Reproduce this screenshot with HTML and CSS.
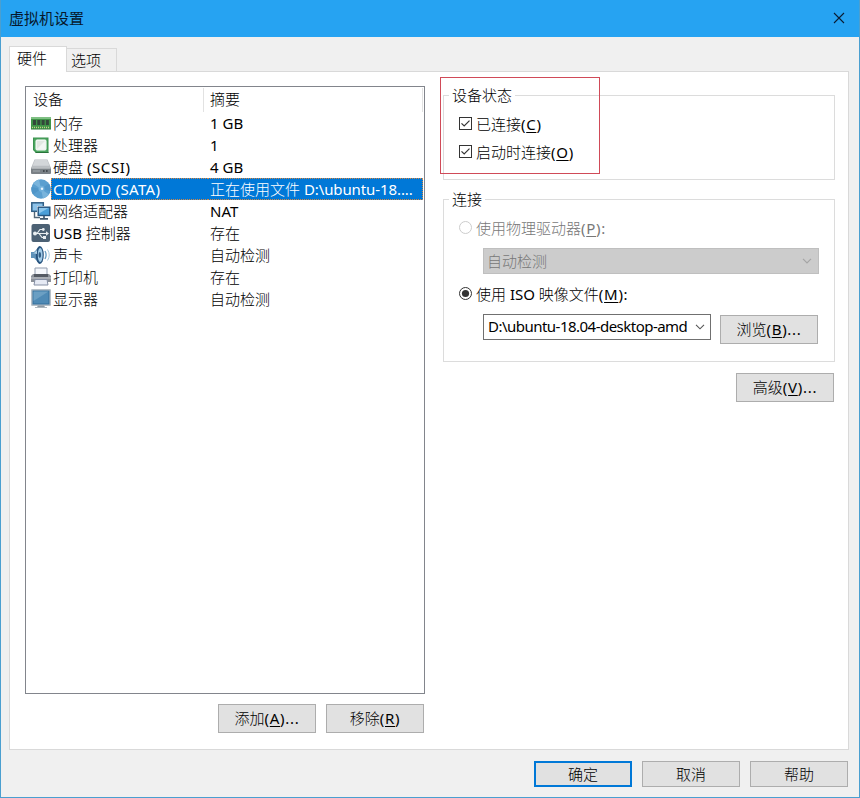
FILE: index.html
```html
<!DOCTYPE html>
<html lang="zh-CN">
<head>
<meta charset="utf-8">
<title>虚拟机设置</title>
<link rel="stylesheet" href="styles.css">
</head>
<body>
<div class="window">
  <header class="titlebar">
    <span>虚拟机设置</span>
    <svg class="close" width="12" height="12" viewBox="0 0 12 12"><path d="M1 1L11 11M11 1L1 11" stroke="#0b1d33" stroke-width="1.1"/></svg>
  </header>
  <nav class="tabs">
    <div class="tab active">硬件</div>
    <div class="tab">选项</div>
  </nav>
  <main class="panel">
    <section class="left">
      <div class="list">
        <div class="head"><span class="c1">设备</span><span class="c2">摘要</span></div>
        <div class="row">
          <svg class="ico" viewBox="0 0 20 20"><rect x="0" y="4" width="20" height="12" fill="#3f9447"/><rect x="0" y="4" width="20" height="2" fill="#7fc083"/><path d="M2 7h3v5H2zM6.3 7h3v5h-3zM10.6 7h3v5h-3zM14.9 7h3v5h-3z" fill="#33473a"/><path d="M1 14.5h18" stroke="#c5d08c" stroke-width="1.4" stroke-dasharray="1 1"/><path d="M0 16.2h20" stroke="#2b6e35" stroke-width=".7"/></svg>
          <span class="name">内存</span><span class="sum"><span class="en">1 GB</span></span></div>
        <div class="row">
          <svg class="ico" viewBox="0 0 20 20"><path d="M2 2.5h15.5v15.5H5l-3-3z" fill="#3c9350"/><path d="M3 3.5h13.5v13.5H5.5L3 14.5z" fill="#4ca55f"/><rect x="5" y="5" width="10" height="10" rx="1" fill="#e2e8e2" stroke="#fff" stroke-width="1"/><path d="M6 14L14 6v8z" fill="#f3f6f3"/><path d="M4.5 17.5h13" stroke="#28733a"/></svg>
          <span class="name">处理器</span><span class="sum"><span class="en">1</span></span></div>
        <div class="row">
          <svg class="ico" viewBox="0 0 20 20"><path d="M3.5 2.5h13L20 11H0z" fill="#b9bdc1"/><path d="M4 2.8h12l2.5 6H1.7z" fill="#d3d6d9"/><rect x="0" y="10.5" width="20" height="6.5" rx="1" fill="#7b8186"/><path d="M.5 11h19" stroke="#dddfe1"/><rect x="12" y="13" width="1.6" height="2" fill="#454b50"/><rect x="15" y="13" width="1.6" height="2" fill="#454b50"/><path d="M2 14h7" stroke="#a4abb0"/></svg>
          <span class="name">硬盘 <span class="en wide">(SCSI)</span></span><span class="sum"><span class="en">4 GB</span></span></div>
        <div class="row selected">
          <svg class="ico" viewBox="0 0 20 20"><circle cx="10" cy="10" r="9.7" fill="#5a9fd0"/><path d="M10 10L2 4.5A9.7 9.7 0 0 1 8 .5zM10 10L18 15.5A9.7 9.7 0 0 1 12 19.5z" fill="#79b4dc"/><path d="M10 10L.5 8A9.7 9.7 0 0 0 2 15.5zM10 10L19.5 12A9.7 9.7 0 0 0 18 4.5z" fill="#4f95c8"/><circle cx="10.5" cy="9.8" r="3" fill="#72b1dc"/><circle cx="11" cy="9.7" r="1.2" fill="#eaf6ff"/></svg>
          <span class="name"><span class="en cd">CD/DVD (SATA)</span></span><span class="sum">正在使用文件 <span class="en iso-name">D:\ubuntu-18....</span></span></div>
        <div class="row">
          <svg class="ico" viewBox="0 0 20 20"><rect x=".8" y="1.8" width="11.5" height="8.5" fill="#8dc3ea" stroke="#315f86" stroke-width="1.5"/><path d="M3.5 11v5.5H9" fill="none" stroke="#536777" stroke-width="1.4"/><rect x="6" y="5" width="13.5" height="10.5" fill="#fff"/><rect x="7.2" y="6.2" width="11.6" height="8.3" fill="#4b9fd8" stroke="#255580" stroke-width="1.4"/><path d="M8 7h9.5L8 12.5z" fill="#8cc7ed"/><path d="M13 15v2M9 17.8h8" stroke="#425b70" stroke-width="1.7"/></svg>
          <span class="name">网络适配器</span><span class="sum"><span class="en">NAT</span></span></div>
        <div class="row">
          <svg class="ico" viewBox="0 0 20 20"><rect x=".5" y="1" width="18.5" height="18" rx="2" fill="#4c6174"/><path d="M3 10.5h13M6 10.5l3-4h3M8 10.5l3 4h2" fill="none" stroke="#e9eef1" stroke-width="1.2"/><circle cx="4" cy="10.5" r="2" fill="#e9eef1"/><circle cx="12.3" cy="6.5" r="1.4" fill="#e9eef1"/><path d="M12 13h3v3h-3zM15 8.3l3 2.2-3 2.2z" fill="#e9eef1"/></svg>
          <span class="name"><span class="en">USB</span> 控制器</span><span class="sum">存在</span></div>
        <div class="row">
          <svg class="ico" viewBox="0 0 20 20"><path d="M0 7h3l6-6v18l-6-6H0z" fill="#5d91b9"/><ellipse cx="8.8" cy="10" rx="4" ry="9" fill="#28547f"/><ellipse cx="9.2" cy="10" rx="2.4" ry="7" fill="#a2cce8"/><ellipse cx="8.8" cy="10" rx="1.3" ry="3" fill="#315d84"/><path d="M1 8h2l3-3v4z" fill="#b0d0e5"/><path d="M14 6q2.2 4 0 8" fill="none" stroke="#679fc5" stroke-width="1.3"/><path d="M16.5 4.5q3.5 5.5 0 11" fill="none" stroke="#a8c9dd"/></svg>
          <span class="name">声卡</span><span class="sum">自动检测</span></div>
        <div class="row">
          <svg class="ico" viewBox="0 0 20 20"><path d="M4 1h12v7H4z" fill="#f5f7fb" stroke="#929daf"/><path d="M2 7h16l2 2v6H0V9z" fill="#8c9199"/><path d="M3 7h14v3H3z" fill="#545a63"/><path d="M0 11h20" stroke="#c6cad0"/><path d="M4 12.5h12l1 5.5H3z" fill="#e6eaf4" stroke="#858fa4"/></svg>
          <span class="name">打印机</span><span class="sum">存在</span></div>
        <div class="row">
          <svg class="ico" viewBox="0 0 20 20"><rect x=".8" y=".8" width="18.4" height="15.4" fill="#c3ccd3" stroke="#9eabb5"/><rect x="2" y="2" width="16" height="13" fill="#4f8ab5" stroke="#356f9b"/><path d="M2.5 2.5h15L2.5 12z" fill="#6b9fc3"/><path d="M7 16.5h6l1 1.5H6z" fill="#8e9aa4"/><path d="M4 18.5h12" stroke="#adb7be"/></svg>
          <span class="name">显示器</span><span class="sum">自动检测</span></div>
      </div>
      <div class="actions">
        <button class="btn">添加<span class="en key">(<u>A</u>)...</span></button>
        <button class="btn">移除<span class="en key">(<u>R</u>)</span></button>
      </div>
    </section>
    <section class="right">
      <div class="highlight"></div>
      <fieldset class="status">
        <legend>设备状态</legend>
        <label class="opt"><svg width="13" height="13" viewBox="0 0 13 13"><rect x=".5" y=".5" width="12" height="12" fill="#fff" stroke="#333"/><path d="M2.5 6.3L5.2 9L10.5 3.7" fill="none" stroke="#333" stroke-width="1.2"/></svg><span>已连接<span class="en key">(<u>C</u>)</span></span></label>
        <label class="opt"><svg width="13" height="13" viewBox="0 0 13 13"><rect x=".5" y=".5" width="12" height="12" fill="#fff" stroke="#333"/><path d="M2.5 6.3L5.2 9L10.5 3.7" fill="none" stroke="#333" stroke-width="1.2"/></svg><span>启动时连接<span class="en key">(<u>O</u>)</span></span></label>
      </fieldset>
      <fieldset class="connection">
        <legend>连接</legend>
        <label class="opt off"><svg width="13" height="13" viewBox="0 0 13 13"><circle cx="6.5" cy="6.5" r="6" fill="#fff" stroke="#ccc"/></svg><span>使用物理驱动器<span class="en key">(<u>P</u>):</span></span></label>
        <div class="select off"><span>自动检测</span><svg width="10" height="6" viewBox="0 0 10 6"><path d="M1 .8L5 4.8L9 .8" fill="none" stroke="#a5a5a5" stroke-width="1.2"/></svg></div>
        <label class="opt iso"><svg width="13" height="13" viewBox="0 0 13 13"><circle cx="6.5" cy="6.5" r="6" fill="#fff" stroke="#333"/><circle cx="6.5" cy="6.5" r="3.6" fill="#333"/></svg><span>使用 <span class="en">ISO</span> 映像文件<span class="en key">(<u>M</u>):</span></span></label>
        <div class="file">
          <div class="select path"><span class="en">D:\ubuntu-18.04-desktop-amd</span><svg width="10" height="6" viewBox="0 0 10 6"><path d="M1 .8L5 4.8L9 .8" fill="none" stroke="#555" stroke-width="1.1"/></svg></div>
          <button class="btn">浏览<span class="en key">(<u>B</u>)...</span></button>
        </div>
      </fieldset>
      <button class="btn advanced">高级<span class="en key">(<u>V</u>)...</span></button>
    </section>
  </main>
  <footer class="footer">
    <button class="btn primary">确定</button>
    <button class="btn">取消</button>
    <button class="btn">帮助</button>
  </footer>
</div>
</body>
</html>
```
FILE: styles.css
```css
* { box-sizing: border-box; }
body {
  margin: 0;
  font: 300 15px/20px "Noto Sans", "Noto Sans CJK SC", sans-serif;
  color: #000;
}
.window {
  display: flex;
  flex-direction: column;
  width: 860px;
  height: 798px;
  background: #f0f0f0;
  border: 1px solid #4a9fd0;
  border-top: 0;
  overflow: hidden;
}
.titlebar {
  display: flex;
  justify-content: space-between;
  align-items: center;
  height: 37px;
  margin: 0 -1px;
  padding: 0 15px 2px 9px;
  background: #26a3f2;
  color: #06182c;
  font-weight: 400;
}
.close { display: block; }
.tabs {
  display: flex;
  align-items: flex-end;
  height: 34px;
  padding-left: 8px;
}
.tab {
  width: 50px;
  height: 23px;
  padding-left: 4px;
  border: 1px solid #d9d9d9;
  border-width: 1px 1px 0 0;
  line-height: 22px;
}
.tab.active {
  z-index: 1;
  width: 58px;
  height: 26px;
  margin-bottom: -1px;
  padding-left: 7px;
  border-left-width: 1px;
  background: #fff;
}
.panel {
  display: flex;
  height: 679px;
  margin: 0 10px 0 8px;
  padding: 14px 13px 0 15px;
  background: #fff;
  border: 1px solid #d9d9d9;
}
.left { flex: none; width: 400px; }
.list {
  height: 608px;
  border: 1px solid #82858c;
}
.head {
  display: flex;
  height: 25px;
  padding-top: 1px;
  line-height: 23px;
}
.c1 { width: 178px; padding-left: 7px; border-right: 1px solid #e2e2e2; }
.c2 { width: 219px; padding-left: 6px; border-right: 1px solid #e2e2e2; }
.row {
  display: flex;
  align-items: center;
  height: 22px;
  padding-left: 5px;
  line-height: 21px;
  white-space: nowrap;
}
.ico { width: 20px; height: 20px; flex: none; }
.name { width: 157px; padding-left: 2px; }
.sum { width: 215px; padding-left: 2px; }
.en { font-weight: 400; }
.cd { letter-spacing: .3px; }
.wide { letter-spacing: .6px; }
.iso-name { letter-spacing: -.1px; }
.selected .name, .selected .sum {
  height: 22px;
  background: #0078d7;
  color: #fff;
  border: 1px dotted #d48743;
  border-width: 1px 0 1px 1px;
  line-height: 20px;
}
.selected .name { padding-left: 1px; }
.selected .sum { border-width: 1px 1px 1px 0; }
.actions {
  display: flex;
  justify-content: flex-end;
  gap: 10px;
  margin-top: 10px;
  padding-right: 1px;
}
.btn {
  width: 98px;
  height: 29px;
  padding: 0 0 2px;
  background: #e1e1e1;
  border: 1px solid #adadad;
  font: inherit;
  color: #000;
  white-space: nowrap;
}
.key { letter-spacing: .7px; }
u { text-decoration-thickness: 1px; text-underline-offset: 2px; }
.right {
  position: relative;
  display: flex;
  flex: none;
  flex-direction: column;
  width: 392px;
  margin-left: 18px;
}
.highlight {
  position: absolute;
  left: -3px;
  top: -9px;
  width: 160px;
  height: 97px;
  border: 1px solid #d04a58;
}
fieldset {
  width: 392px;
  margin: 0;
  padding: 0 0 0 15px;
  border: 1px solid #dcdcdc;
}
legend {
  height: 19px;
  margin-left: -10px;
  padding: 0 3px;
  line-height: 18px;
}
.status { height: 94px; }
.connection { height: 172px; margin-top: 10px; }
.opt {
  display: flex;
  align-items: center;
  gap: 4px;
  height: 28px;
}
.status .opt:first-of-type { margin-top: 4px; }
.opt > span { padding-top: 1px; }
.connection .opt { height: 20px; }
.connection .opt.off { margin-top: 8px; color: #787878; }
.select {
  display: flex;
  justify-content: space-between;
  align-items: center;
  width: 336px;
  height: 26px;
  margin: 11px 0 0 24px;
  padding: 0 6px 0 3px;
  border: 1px solid #bfbfbf;
  background: #ccc;
  white-space: nowrap;
}
.select.off { color: #787878; }
.connection .iso { margin-top: 9px; }
.file {
  display: flex;
  align-items: flex-start;
  gap: 9px;
  margin: 11px 0 0 24px;
}
.path {
  width: 228px;
  margin: 0;
  padding: 0 5px 2px 4px;
  border-color: #707070;
  background: #fff;
  letter-spacing: -.52px;
}
.path svg { flex: none; position: relative; top: 1px; }
.file .btn { margin-top: 1px; }
.advanced { align-self: flex-end; margin: 11px 1px 0 0; }
.footer {
  display: flex;
  justify-content: flex-end;
  gap: 10px;
  padding: 11px 11px 0 0;
}
.footer .btn { height: 26px; padding-bottom: 0; }
.btn.primary { border: 2px solid #0078d7; }
```
